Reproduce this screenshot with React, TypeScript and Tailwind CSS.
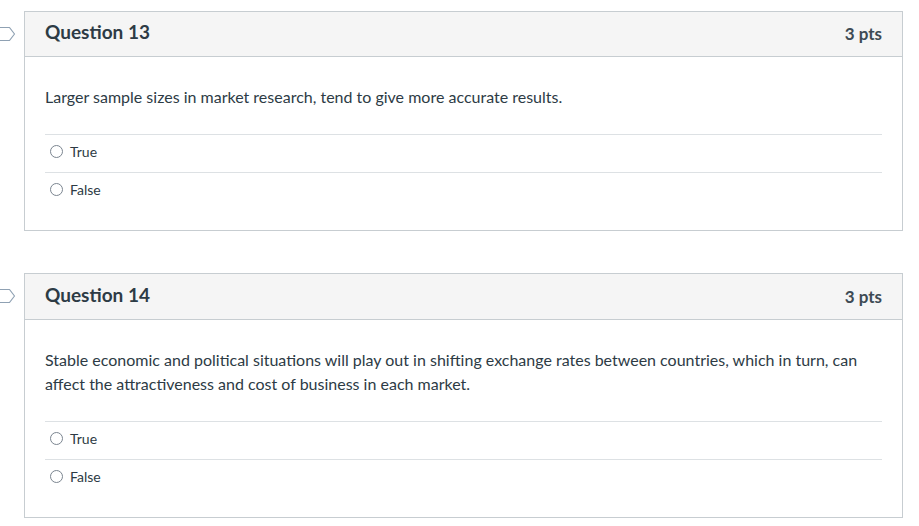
import React from "react";

const Flag = () => (
  <svg width="16" height="16" viewBox="0 0 16 16" className="block">
    <path d="M-4 1.5 H9.5 L14.5 8 L9.5 14.5 H-4 Z" fill="white" stroke="#8fa1b3" strokeWidth="1.2" strokeLinejoin="round" />
  </svg>
);

const Answer = ({ label }: { label: string }) => (
  <div className="border-t border-[#dde1e4] h-[38px] flex items-center pl-[5px] pb-[5px]">
    <span className="w-[13px] h-[13px] rounded-full border border-[#7b8590] bg-white" />
    <span className="ml-[7px] text-[14px] text-[#2d3b45]">{label}</span>
  </div>
);

const Question = ({ num, text, tall }: { num: number; text: string; tall?: boolean }) => (
  <div className="flex items-start">
    <div className={`w-[24px] flex items-center overflow-hidden ${tall ? "h-[46px]" : "h-[45px]"}`}>
      <Flag />
    </div>
    <div className="w-[879px] border border-[#c7cdd1] bg-white">
      <div
        className={`bg-[#f5f5f5] border-b border-[#c7cdd1] flex items-center justify-between px-[20px] ${
          tall ? "h-[46px]" : "h-[45px]"
        }`}
      >
        <span className="text-[19px] font-bold text-[#2d3b45] pb-[3px]">Question {num}</span>
        <span className="text-[17px] font-bold text-[#3d4a54]">3 pts</span>
      </div>
      <div className="px-[20px] pt-[28px] pb-[20px]">
        <p className="text-[16px] leading-[24px] text-[#2d3b45] mb-[25px]">{text}</p>
        <Answer label="True" />
        <Answer label="False" />
      </div>
    </div>
  </div>
);

export default function App() {
  return (
    <div
      className="w-[919px] h-[526px] bg-white pt-[11px] flex flex-col gap-[42px]"
      style={{ fontFamily: "Lato, 'Open Sans', sans-serif" }}
    >
      <Question num={13} text="Larger sample sizes in market research, tend to give more accurate results." />
      <Question
        num={14}
        tall
        text="Stable economic and political situations will play out in shifting exchange rates between countries, which in turn, can affect the attractiveness and cost of business in each market."
      />
    </div>
  );
}
